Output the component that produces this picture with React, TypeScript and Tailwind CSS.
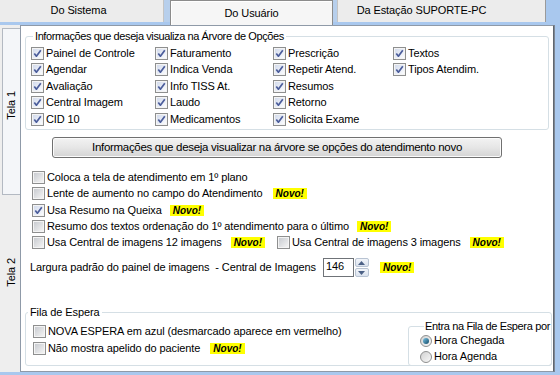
import React from "react";

function Check({ checked }: { checked?: boolean }) {
  return (
    <span className="flex h-[13px] w-[13px] shrink-0 border border-[#8e8f8f] bg-[#f4f4f4] p-[1px]">
      {checked ? (
        <span className="flex flex-1 items-center justify-center bg-gradient-to-br from-[#d3dbec] to-[#fbfcfe]">
          <svg width="9" height="9" viewBox="0 0 9 9">
            <path d="M1.3 4.4 L3.4 7.2 L7.8 1.2" stroke="#4b5d9b" strokeWidth="1.7" fill="none" strokeLinejoin="round" />
          </svg>
        </span>
      ) : (
        <span className="flex-1 bg-gradient-to-br from-[#c9ccd1] to-[#f3f3f3]" />
      )}
    </span>
  );
}

function Novo({ className = "" }: { className?: string }) {
  return (
    <span className={"inline-block bg-[#ffff00] px-[3px] text-[10px] font-bold italic leading-[11px] tracking-normal text-black " + className}>
      Novo!
    </span>
  );
}

function Item({ label, checked, h = "h-[16px]", children }: { label: string; checked?: boolean; h?: string; children?: React.ReactNode }) {
  return (
    <div className={"flex items-center " + h}>
      <Check checked={checked} />
      <span className="ml-[2px] whitespace-nowrap">{label}</span>
      {children}
    </div>
  );
}

function Radio({ on }: { on?: boolean }) {
  return (
    <span className="flex h-[12px] w-[12px] shrink-0 items-center justify-center rounded-full border border-[#8e8f8f] bg-gradient-to-br from-[#d2d2d2] to-[#f8f8f8]">
      {on && <span className="h-[6px] w-[6px] rounded-full bg-gradient-to-br from-[#7cc6e6] to-[#0d4a68]" />}
    </span>
  );
}

const group1: [string, boolean][] = [
  ["Painel de Controle", true],
  ["Agendar", true],
  ["Avaliação", true],
  ["Central Imagem", true],
  ["CID 10", true],
  ["Faturamento", true],
  ["Indica Venda", true],
  ["Info TISS At.", true],
  ["Laudo", true],
  ["Medicamentos", true],
  ["Prescrição", true],
  ["Repetir Atend.", true],
  ["Resumos", true],
  ["Retorno", true],
  ["Solicita Exame", true],
  ["Textos", true],
  ["Tipos Atendim.", true],
];

export default function App() {
  return (
    <div className="flex h-[375px] w-[560px] flex-col overflow-hidden bg-[#a9c8ee] font-['Liberation_Sans',Arial,sans-serif] text-[11px] leading-[13px] tracking-[-0.1px] text-black">
      {/* top tabs */}
      <div className="flex h-[22px] shrink-0">
        <div className="flex w-[163px] items-center justify-center bg-[#ececec] pb-[2px] pr-[6px]">Do Sistema</div>
        <div className="w-[7px] border-l border-[#c4c4c4] bg-[#b7cfec]" />
        <div className="relative z-10 flex h-[25px] w-[163px] items-center justify-center border border-b-0 border-[#8c8c8c] bg-[#f6f6f6] pt-[1px] shadow-[inset_1px_1px_0_#ffffff]">
          Do Usuário
        </div>
        <div className="w-[5px] border-r border-[#c4c4c4] bg-[#b7cfec]" />
        <div className="flex w-[208px] items-center justify-center border-r border-[#9a9a9a] bg-[#ececec] pb-[2px] pr-[40px]">
          Da Estação SUPORTE-PC
        </div>
      </div>
      <div className="h-[3px] shrink-0 bg-[#a9c8ee]" />
      {/* body */}
      <div className="flex h-[347px] shrink-0">
        {/* left vertical tabs */}
        <div className="flex w-[20px] shrink-0 flex-col bg-[#eeeeee]">
          <div className="ml-[2px] mt-[3px] flex h-[167px] w-[18px] items-center justify-center border border-r-0 border-[#b3b9c2] bg-[#f4f6f9] pb-[12px]">
            <span className="rotate-180 [writing-mode:vertical-rl]">Tela 1</span>
          </div>
          <div className="flex h-[150px] items-center justify-center pl-[2px] pt-[4px]">
            <span className="rotate-180 [writing-mode:vertical-rl]">Tela 2</span>
          </div>
        </div>
        {/* panel */}
        <div className="flex w-[534px] shrink-0 flex-col border border-[#8f9aa8] border-r-[#5f6670] bg-white shadow-[1px_0_0_#7d8794]">
          <fieldset className="ml-[4px] mt-[4px] w-[524px] rounded-[3px] border border-[#d5dfe5] pb-[1px] pl-[5px]">
            <legend className="ml-[2px] px-[2px] leading-[13px] tracking-[-0.4px]">Informações que deseja visualiza na Árvore de Opções</legend>
            <div className="grid grid-flow-col grid-cols-[124px_118px_120px_1fr] grid-rows-[repeat(5,16.5px)] pt-[2px]">
              {group1.map(([l, c]) => (
                <Item key={l} label={l} checked={c} h="h-[16.5px]" />
              ))}
            </div>
          </fieldset>
          <button className="ml-[31px] mt-[7px] flex h-[21px] w-[450px] items-center justify-center rounded-[3px] border border-[#707070] bg-gradient-to-b from-[#f3f3f3] via-[#e6e6e6] to-[#d4d4d4] text-[11.5px] tracking-[-0.3px] shadow-[inset_0_0_0_1px_#fbfbfb]">
            Informações que deseja visualizar na árvore se opções do atendimento novo
          </button>
          <div className="ml-[11px] mt-[12px] flex flex-col">
            <Item h="h-[16.25px]" label="Coloca a tela de atendimento em 1º plano" />
            <Item h="h-[16.25px]" label="Lente de aumento no campo do Atendimento">
              <Novo className="ml-[10px]" />
            </Item>
            <Item h="h-[16.25px]" label="Usa Resumo na Queixa" checked>
              <Novo className="ml-[8px]" />
            </Item>
            <Item h="h-[16.25px]" label="Resumo dos textos ordenação do 1º atendimento para o último">
              <Novo className="ml-[8px]" />
            </Item>
            <div className="flex h-[16.25px] items-center">
              <Item label="Usa Central de imagens 12 imagens">
                <Novo className="ml-[9px]" />
              </Item>
              <div className="ml-[12px]">
                <Item label="Usa Central de imagens 3 imagens">
                  <Novo className="ml-[9px]" />
                </Item>
              </div>
            </div>
          </div>
          <div className="ml-[9px] mt-[7px] flex h-[20px] items-center">
            <span className="whitespace-pre">Largura padrão do painel de imagens  - Central de Imagens</span>
            <div className="ml-[7px] flex h-[19px] w-[31px] items-start border border-[#6f7378] bg-white pl-[2px] pt-[1px]">146</div>
            <div className="ml-[1px] flex h-[19px] w-[14px] flex-col gap-[1px]">
              <div className="flex flex-1 items-center justify-center rounded-[2px] border border-[#b8c3d2] bg-gradient-to-b from-[#f2f5fa] to-[#dbe3ee]">
                <svg width="7" height="4" viewBox="0 0 7 4"><path d="M0 4 L3.5 0 L7 4 Z" fill="#4c6186" /></svg>
              </div>
              <div className="flex flex-1 items-center justify-center rounded-[2px] border border-[#b8c3d2] bg-gradient-to-b from-[#f2f5fa] to-[#dbe3ee]">
                <svg width="7" height="4" viewBox="0 0 7 4"><path d="M0 0 L3.5 4 L7 0 Z" fill="#4c6186" /></svg>
              </div>
            </div>
            <Novo className="ml-[11px]" />
          </div>
          <fieldset className="ml-[4px] mt-[28px] flex h-[60px] w-[527px] rounded-[3px] border border-[#d5dfe5]">
            <legend className="ml-[2px] px-[2px] leading-[13px]">Fila de Espera</legend>
            <div className="flex w-full">
              <div className="flex flex-1 flex-col gap-[1px] pl-[7px] pt-[5px]">
                <Item label="NOVA ESPERA em azul (desmarcado aparece em vermelho)" />
                <Item label="Não mostra apelido do paciente">
                  <Novo className="ml-[10px]" />
                </Item>
              </div>
              <fieldset className="-mb-[1px] -mr-[1px] mt-[1px] w-[142px] rounded-[3px] border border-[#d5dfe5] pl-[11px]">
                <legend className="ml-[4px] whitespace-nowrap px-[1px] leading-[13px] tracking-[-0.35px]">Entra na Fila de Espera por</legend>
                <div className="flex h-[16px] items-center gap-[2px]">
                  <Radio on />
                  <span>Hora Chegada</span>
                </div>
                <div className="flex h-[16px] items-center gap-[2px]">
                  <Radio />
                  <span>Hora Agenda</span>
                </div>
              </fieldset>
            </div>
          </fieldset>
        </div>
      </div>
    </div>
  );
}
